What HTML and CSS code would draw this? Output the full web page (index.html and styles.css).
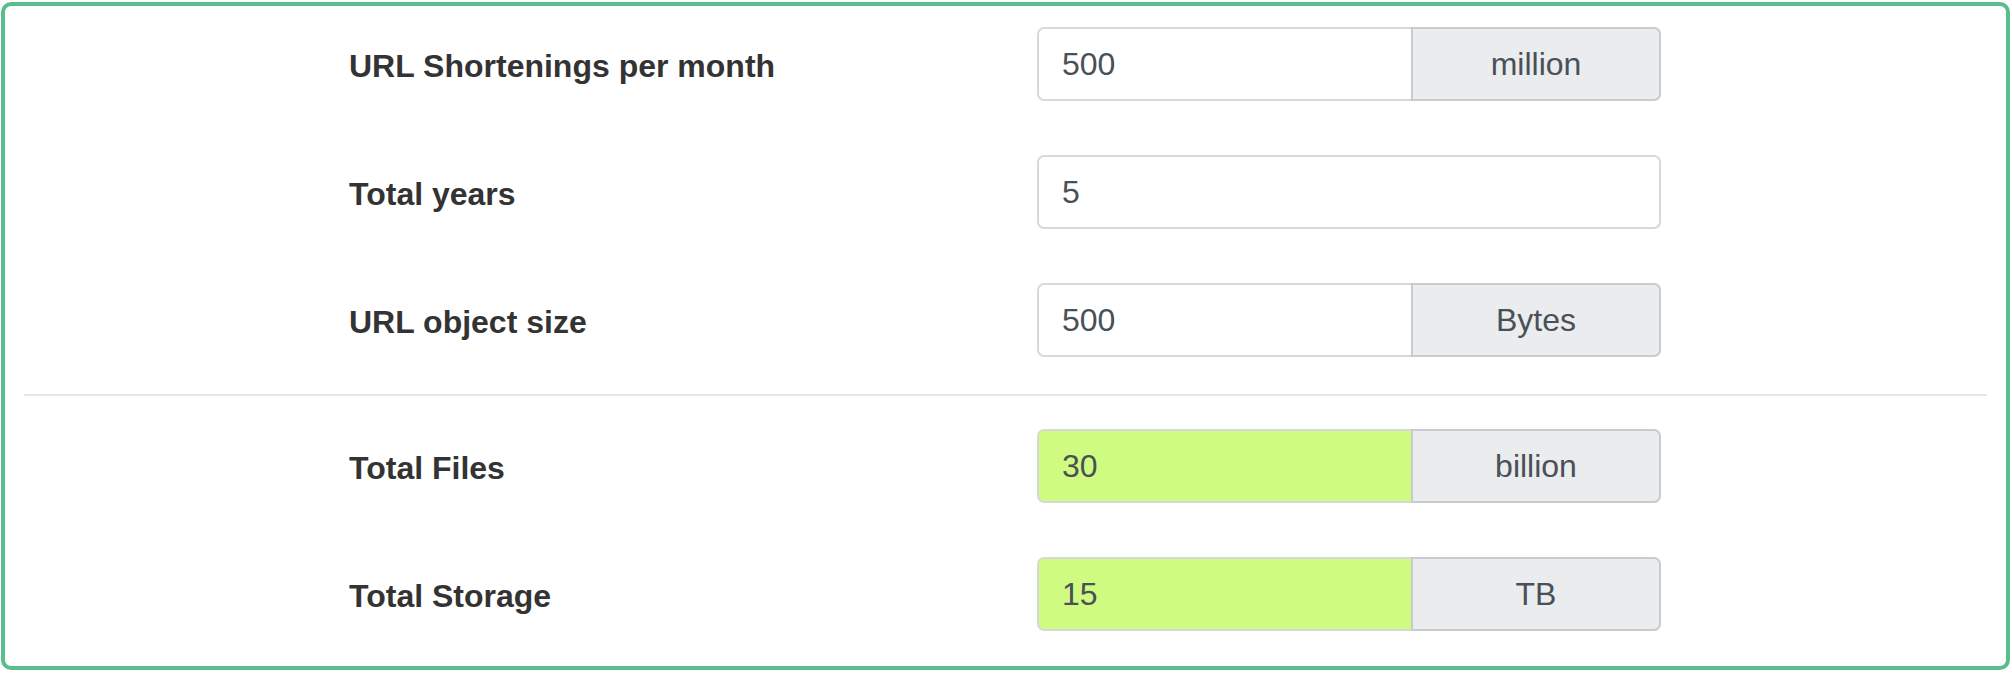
FILE: index.html
```html
<!DOCTYPE html>
<html>
<head>
<meta charset="utf-8">
<link rel="stylesheet" href="styles.css">
</head>
<body>
<div class="panel">
  <div class="section section-top">
    <div class="row">
      <div class="label">URL Shortenings per month</div>
      <div class="group">
        <div class="field">500</div>
        <div class="addon">million</div>
      </div>
    </div>
    <div class="row">
      <div class="label">Total years</div>
      <div class="group">
        <div class="field field-full">5</div>
      </div>
    </div>
    <div class="row">
      <div class="label">URL object size</div>
      <div class="group">
        <div class="field">500</div>
        <div class="addon">Bytes</div>
      </div>
    </div>
  </div>
  <div class="divider"></div>
  <div class="section section-bottom">
    <div class="row">
      <div class="label">Total Files</div>
      <div class="group">
        <div class="field result">30</div>
        <div class="addon">billion</div>
      </div>
    </div>
    <div class="row">
      <div class="label">Total Storage</div>
      <div class="group">
        <div class="field result">15</div>
        <div class="addon">TB</div>
      </div>
    </div>
  </div>
</div>
</body>
</html>
```
FILE: styles.css
```css
html, body {
  margin: 0;
  padding: 0;
  background: #ffffff;
}
body {
  font-family: "Liberation Sans", Arial, Helvetica, sans-serif;
  padding: 2px 2px 4px 1px;
}
.panel {
  border: 4px solid #5bbd8d;
  border-radius: 10px;
  padding: 0 19px;
  height: 668px;
  box-sizing: border-box;
}
.section {
  display: flex;
  flex-direction: column;
  gap: 54px;
}
.section-top {
  padding-top: 21px;
  padding-bottom: 37px;
}
.section-bottom {
  padding-top: 33px;
}
.divider {
  height: 2px;
  background: #e6e6e6;
}
.row {
  display: grid;
  grid-template-columns: 325px 688px 624px;
  align-items: center;
  height: 74px;
}
.label {
  grid-column: 2;
  font-size: 32px;
  font-weight: bold;
  color: #333333;
  padding-top: 4px;
}
.group {
  grid-column: 3;
  display: flex;
  height: 74px;
}
.field {
  width: 374px;
  box-sizing: border-box;
  border: 2px solid #d8d8d8;
  border-right: none;
  border-radius: 7px 0 0 7px;
  background: #ffffff;
  color: #495057;
  font-size: 32px;
  display: flex;
  align-items: center;
  padding-left: 23px;
}
.field-full {
  width: 624px;
  border-right: 2px solid #d8d8d8;
  border-radius: 7px;
}
.result {
  background: #cffc80;
}
.addon {
  width: 250px;
  box-sizing: border-box;
  border: 2px solid #cacbcd;
  border-radius: 0 7px 7px 0;
  background: #ebecee;
  color: #495057;
  font-size: 32px;
  display: flex;
  align-items: center;
  justify-content: center;
}
```
